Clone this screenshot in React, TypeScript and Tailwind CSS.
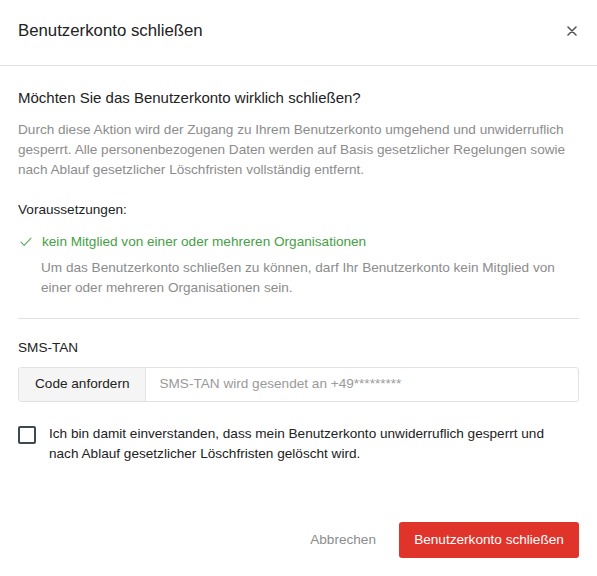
import { useState } from "react";

const CheckIcon = () => (
  <svg width="12" height="10" viewBox="0 0 12 10" fill="none" className="shrink-0">
    <path d="M1 5.2L4.2 8.4L11 1.2" stroke="#5aa85a" strokeWidth="1.1" strokeLinecap="round" strokeLinejoin="round" />
  </svg>
);

const CloseIcon = () => (
  <svg width="10" height="10" viewBox="0 0 10 10" fill="none">
    <path d="M1 1L9 9M9 1L1 9" stroke="#555" strokeWidth="1.6" strokeLinecap="round" />
  </svg>
);

export default function App() {
  const [agreed, setAgreed] = useState(false);

  return (
    <div className="w-[597px] h-[576px] bg-white text-[#222] font-['Liberation_Sans',Arial,sans-serif] flex flex-col">
      <div className="h-[66px] shrink-0 flex items-center justify-between pl-[18px] pr-[20px] border-b border-[#e2e2e2]">
        <h1 className="text-[16.8px] leading-5 pb-[4px]">Benutzerkonto schließen</h1>
        <button type="button" className="pb-[4px]">
          <CloseIcon />
        </button>
      </div>

      <div className="px-[18px] pt-[22px] flex flex-col text-[13.6px]">
        <h2 className="text-[15px] leading-5">Möchten Sie das Benutzerkonto wirklich schließen?</h2>
        <p className="mt-3 leading-5 text-[#8c8c8c]">
          Durch diese Aktion wird der Zugang zu Ihrem Benutzerkonto umgehend und unwiderruflich gesperrt. Alle
          personenbezogenen Daten werden auf Basis gesetzlicher Regelungen sowie nach Ablauf gesetzlicher Löschfristen
          vollständig entfernt.
        </p>

        <div className="mt-5 leading-5">Voraussetzungen:</div>
        <div className="mt-3 flex items-center gap-[10px] pl-[2px] leading-5 text-[#45a045]">
          <CheckIcon />
          <span>kein Mitglied von einer oder mehreren Organisationen</span>
        </div>
        <p className="mt-[6px] pl-[23px] pr-4 leading-5 text-[#8c8c8c]">
          Um das Benutzerkonto schließen zu können, darf Ihr Benutzerkonto kein Mitglied von einer oder mehreren
          Organisationen sein.
        </p>

        <div className="mt-5 border-t border-[#e2e2e2]" />

        <div className="mt-[19px] leading-5">SMS-TAN</div>
        <div className="mt-[9px] h-[35px] flex border border-[#e2e2e2] rounded-[3px] overflow-hidden">
          <button type="button" className="px-[16px] bg-[#f5f5f5] border-r border-[#e2e2e2] text-[#222]">
            Code anfordern
          </button>
          <input
            className="flex-1 px-[13px] outline-none placeholder:text-[#9a9a9a]"
            placeholder="SMS-TAN wird gesendet an +49*********"
          />
        </div>

        <label className="mt-[22px] flex items-start gap-[13px] cursor-pointer">
          <span
            onClick={() => setAgreed(!agreed)}
            className={`mt-[2px] w-[18px] h-[18px] shrink-0 border-2 border-[#3d4a50] rounded-[2px] ${agreed ? "bg-[#3d4a50]" : "bg-white"}`}
          />
          <span className="leading-[20px] pr-[30px]">
            Ich bin damit einverstanden, dass mein Benutzerkonto unwiderruflich gesperrt und nach Ablauf gesetzlicher
            Löschfristen gelöscht wird.
          </span>
        </label>
      </div>

      <div className="mt-auto pb-[18px] pr-[18px] flex justify-end items-center gap-[7px] text-[13.6px]">
        <button type="button" className="px-4 h-9 text-[#8c8c8c]">
          Abbrechen
        </button>
        <button type="button" className="h-9 w-[180px] rounded-[3px] bg-[#e0342b] text-white">
          Benutzerkonto schließen
        </button>
      </div>
    </div>
  );
}
